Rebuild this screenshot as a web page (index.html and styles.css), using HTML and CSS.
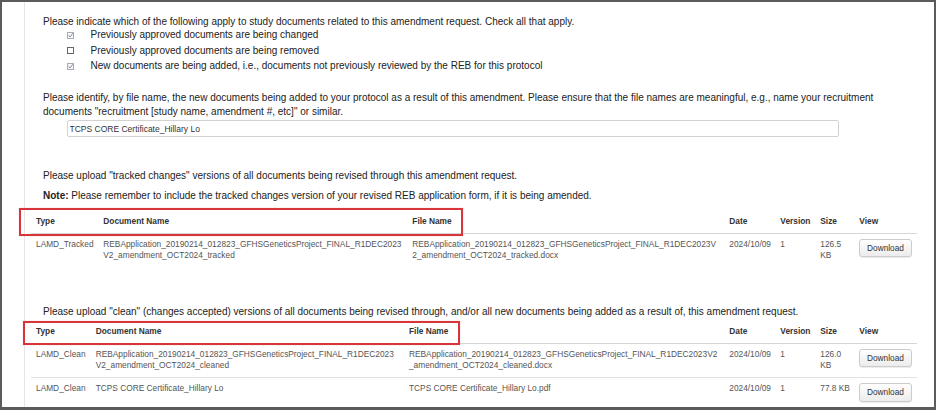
FILE: index.html
```html
<!DOCTYPE html>
<html>
<head>
<meta charset="utf-8">
<link rel="stylesheet" href="styles.css">
</head>
<body>
<div class="frame">
  <div class="panel">
    <p class="q-title">Please indicate which of the following apply to study documents related to this amendment request. Check all that apply.</p>
    <ul class="checklist">
      <li><span class="cb"><svg width="7" height="7" viewBox="0 0 7 7"><rect x="0.5" y="0.5" width="6" height="6" fill="#f6f7f9" stroke="#a7acb6"/><path d="M1.6 3.4 L3 5 L5.9 1.2" stroke="#7d828c" stroke-width="0.9" fill="none"/></svg></span>Previously approved documents are being changed</li>
      <li><span class="cb"><svg width="7" height="7" viewBox="0 0 7 7"><rect x="0.5" y="0.5" width="6" height="6" fill="#fff" stroke="#666"/></svg></span>Previously approved documents are being removed</li>
      <li><span class="cb"><svg width="7" height="7" viewBox="0 0 7 7"><rect x="0.5" y="0.5" width="6" height="6" fill="#f6f7f9" stroke="#a7acb6"/><path d="M1.6 3.4 L3 5 L5.9 1.2" stroke="#7d828c" stroke-width="0.9" fill="none"/></svg></span>New documents are being added, i.e., documents not previously reviewed by the REB for this protocol</li>
    </ul>
    <p class="q-text q-identify">Please identify, by file name, the new documents being added to your protocol as a result of this amendment. Please ensure that the file names are meaningful, e.g., name your recruitment documents "recruitment [study name, amendment #, etc]" or similar.</p>
    <div class="field"><input class="text-input" type="text" value="TCPS CORE Certificate_Hillary Lo"></div>
    <p class="q-text q-tracked">Please upload "tracked changes" versions of all documents being revised through this amendment request.</p>
    <p class="q-text q-note"><b>Note:</b> Please remember to include the tracked changes version of your revised REB application form, if it is being amended.</p>

    <div class="doc-table-wrap wrap-tracked">
      <div class="mark mark-tracked"></div>
      <table class="doc-table">
        <colgroup>
          <col class="c-type1"><col class="c-doc1"><col class="c-file1"><col class="c-date"><col class="c-ver"><col class="c-size"><col class="c-view">
        </colgroup>
        <thead>
          <tr><th>Type</th><th>Document Name</th><th>File Name</th><th>Date</th><th>Version</th><th>Size</th><th>View</th></tr>
        </thead>
        <tbody>
          <tr>
            <td>LAMD_Tracked</td>
            <td>REBApplication_20190214_012823_GFHSGeneticsProject_FINAL_R1DEC2023<br>V2_amendment_OCT2024_tracked</td>
            <td>REBApplication_20190214_012823_GFHSGeneticsProject_FINAL_R1DEC2023V<br>2_amendment_OCT2024_tracked.docx</td>
            <td>2024/10/09</td>
            <td>1</td>
            <td>126.5<br>KB</td>
            <td><button class="btn-download" type="button">Download</button></td>
          </tr>
        </tbody>
      </table>
    </div>

    <p class="q-text q-clean">Please upload "clean" (changes accepted) versions of all documents being revised through, and/or all new documents being added as a result of, this amendment request.</p>

    <div class="doc-table-wrap wrap-clean">
      <div class="mark mark-clean"></div>
      <table class="doc-table">
        <colgroup>
          <col class="c-type2"><col class="c-doc2"><col class="c-file2"><col class="c-date"><col class="c-ver"><col class="c-size"><col class="c-view">
        </colgroup>
        <thead>
          <tr><th>Type</th><th>Document Name</th><th>File Name</th><th>Date</th><th>Version</th><th>Size</th><th>View</th></tr>
        </thead>
        <tbody>
          <tr>
            <td>LAMD_Clean</td>
            <td>REBApplication_20190214_012823_GFHSGeneticsProject_FINAL_R1DEC2023<br>V2_amendment_OCT2024_cleaned</td>
            <td>REBApplication_20190214_012823_GFHSGeneticsProject_FINAL_R1DEC2023V2<br>_amendment_OCT2024_cleaned.docx</td>
            <td>2024/10/09</td>
            <td>1</td>
            <td>126.0<br>KB</td>
            <td><button class="btn-download" type="button">Download</button></td>
          </tr>
          <tr class="row-sep">
            <td>LAMD_Clean</td>
            <td>TCPS CORE Certificate_Hillary Lo</td>
            <td>TCPS CORE Certificate_Hillary Lo.pdf</td>
            <td>2024/10/09</td>
            <td>1</td>
            <td>77.8 KB</td>
            <td><button class="btn-download" type="button">Download</button></td>
          </tr>
        </tbody>
      </table>
    </div>
  </div>
</div>
</body>
</html>
```
FILE: styles.css
```css
html, body {
  margin: 0;
  padding: 0;
  background: #fff;
}
body {
  font-family: "Liberation Sans", Arial, sans-serif;
  color: #222;
}
.frame {
  width: 936px;
  height: 410px;
  box-sizing: border-box;
  border: 2px solid #5b5b5b;
  border-bottom-width: 3px;
  overflow: hidden;
  background: #fff;
}
.panel {
  margin-left: 22px;
  height: 100%;
  border-left: 1px solid #e6e6e6;
  padding: 12.5px 0 0 6px;
  box-sizing: border-box;
}
p { margin: 0; }
.q-title {
  margin: 0 17px 0 12px;
  font-size: 10px;
  line-height: 13px;
}
.checklist {
  list-style: none;
  margin: -0.5px 0 0 0;
  padding: 0 0 0 36px;
  font-size: 10px;
  line-height: 15.5px;
}
.checklist li {
  display: flex;
  align-items: center;
}
.cb {
  display: inline-flex;
  width: 7px;
  height: 7px;
  margin-right: 16.5px;
  margin-top: 1px;
}
.q-text {
  margin-left: 12px;
  margin-right: 17px;
  font-size: 10px;
  line-height: 14px;
}
.q-identify { margin-top: 17px; }
.field {
  margin: 1.5px 0 0 36px;
}
.text-input {
  display: block;
  width: 772px;
  height: 17.3px;
  box-sizing: border-box;
  border: 1px solid #d2d2d2;
  border-radius: 2px;
  padding: 0 0 0 1.5px;
  font-family: "Liberation Sans", Arial, sans-serif;
  font-size: 8.5px;
  color: #333;
  background: #fff;
  outline: none;
}
.q-tracked { margin-top: 32.2px; }
.q-note { margin-top: 6px; }
.q-note b { font-weight: bold; color: #222; }
.q-clean { margin-top: 38px; }

.doc-table-wrap {
  position: relative;
  width: 886px;
}
.wrap-tracked { margin-top: 7.7px; }
.wrap-clean { margin-top: 2px; }

.mark {
  position: absolute;
  box-sizing: border-box;
  border: 2px solid #d8353a;
  box-shadow: 0 0 1px rgba(200, 50, 50, 0.35);
  pointer-events: none;
}
.mark-tracked {
  left: -11.7px;
  top: -2.9px;
  width: 443.7px;
  height: 27.4px;
}
.mark-clean {
  left: -8.3px;
  top: -0.5px;
  width: 437.3px;
  height: 24.6px;
}

.doc-table {
  width: 886px;
  table-layout: fixed;
  border-collapse: collapse;
  font-size: 8.33px;
  line-height: 11.8px;
}
.c-type1 { width: 67.3px; }
.c-doc1 { width: 309px; }
.c-file1 { width: 317px; }
.c-type2 { width: 59.7px; }
.c-doc2 { width: 313.3px; }
.c-file2 { width: 320.3px; }
.c-date { width: 51px; }
.c-ver { width: 40px; }
.c-size { width: 39px; }
.c-view { width: auto; }

.doc-table th {
  text-align: left;
  font-weight: bold;
  color: #333;
  padding: 4.8px 5px;
  border-bottom: 1px solid #d6d6d6;
  vertical-align: bottom;
  white-space: nowrap;
}
.doc-table td {
  color: #555;
  padding: 5px 5px;
  vertical-align: top;
  white-space: nowrap;
  overflow: hidden;
}
.doc-table .row-sep td {
  border-top: 1px solid #e2e2e2;
}
.btn-download {
  display: block;
  width: 52.4px;
  height: 18.4px;
  box-sizing: border-box;
  padding: 0;
  margin: 0;
  border: 1px solid #cccccc;
  border-radius: 3px;
  background: linear-gradient(#ffffff, #ececec);
  box-shadow: 0 1px 1px rgba(0, 0, 0, 0.08);
  font-family: "Liberation Sans", Arial, sans-serif;
  font-size: 8.3px;
  line-height: 16px;
  color: #333;
  text-align: center;
}
```
